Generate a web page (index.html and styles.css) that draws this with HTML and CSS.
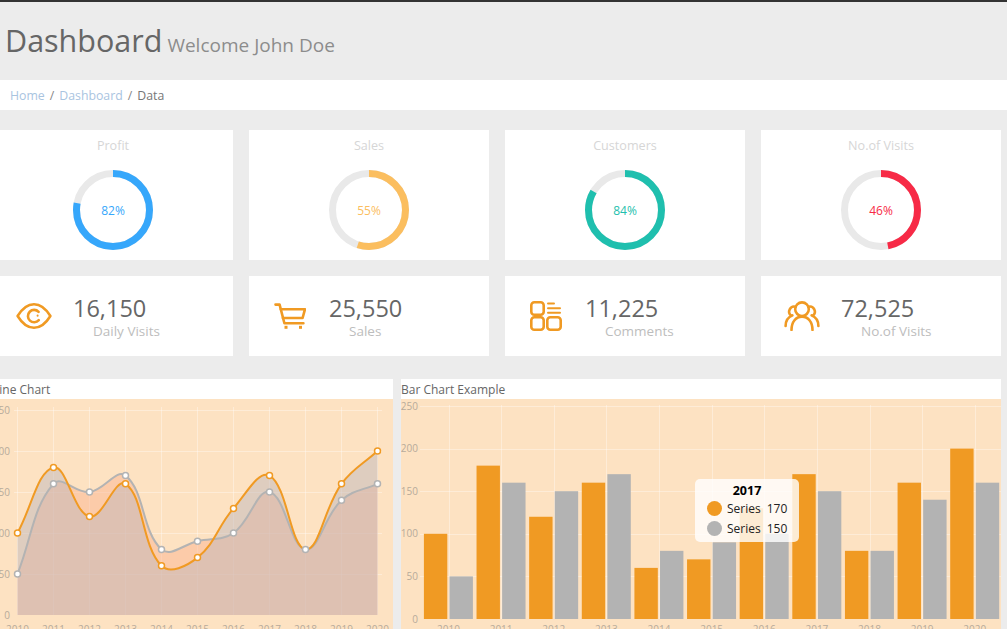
FILE: index.html
```html
<!DOCTYPE html>
<html lang="en">
<head>
<meta charset="utf-8">
<title>Dashboard</title>
<link rel="stylesheet" href="styles.css">
</head>
<body>
<header class="page-head">
  <h1 class="page-title">Dashboard</h1>
  <span class="page-sub">Welcome John Doe</span>
</header>
<nav class="crumbs">
  <a class="crumb-link">Home</a><span class="crumb-sep">/</span><a class="crumb-link">Dashboard</a><span class="crumb-sep">/</span><span class="crumb-now">Data</span>
</nav>
<main class="content">
  <section class="cards">
    <article class="card donut-card">
      <h2 class="card-title">Profit</h2>
      <svg class="donut" viewBox="0 0 80 80"><circle class="track" cx="40" cy="40" r="36.5" pathLength="100"/><circle class="arc blue" cx="40" cy="40" r="36.5" pathLength="100" stroke-dasharray="78 100"/><text class="pct blue-text" x="40" y="44.5">82%</text></svg>
    </article>
    <article class="card donut-card">
      <h2 class="card-title">Sales</h2>
      <svg class="donut" viewBox="0 0 80 80"><circle class="track" cx="40" cy="40" r="36.5" pathLength="100"/><circle class="arc amber" cx="40" cy="40" r="36.5" pathLength="100" stroke-dasharray="55 100"/><text class="pct amber-text" x="40" y="44.5">55%</text></svg>
    </article>
    <article class="card donut-card">
      <h2 class="card-title">Customers</h2>
      <svg class="donut" viewBox="0 0 80 80"><circle class="track" cx="40" cy="40" r="36.5" pathLength="100"/><circle class="arc teal" cx="40" cy="40" r="36.5" pathLength="100" stroke-dasharray="83.5 100"/><text class="pct teal-text" x="40" y="44.5">84%</text></svg>
    </article>
    <article class="card donut-card">
      <h2 class="card-title">No.of Visits</h2>
      <svg class="donut" viewBox="0 0 80 80"><circle class="track" cx="40" cy="40" r="36.5" pathLength="100"/><circle class="arc red" cx="40" cy="40" r="36.5" pathLength="100" stroke-dasharray="47 100"/><text class="pct red-text" x="40" y="44.5">46%</text></svg>
    </article>

    <article class="card stat-card">
      <div class="stat-icon">
        <svg class="icon" width="36" height="28" viewBox="0 0 36 28"><path d="M1.6 14C6.5 6 11.5 2.2 18 2.2S29.5 6 34.4 14C29.5 22 24.5 25.8 18 25.8S6.5 22 1.6 14Z"/><path d="M22.8 18.2A6.2 6.2 0 1 1 22.6 9.8"/><path class="thin" d="M21.6 13.6V13.7"/></svg>
      </div>
      <div class="stat-body"><div class="stat-value">16,150</div><div class="stat-label">Daily Visits</div></div>
    </article>
    <article class="card stat-card">
      <div class="stat-icon">
        <svg class="icon" width="32" height="26" viewBox="0 0 32 26"><path d="M1.5 1.6H5.6L10.4 20.2H29.4"/><path d="M6.8 6.2H31L28.6 15H8.9"/><rect class="solid" x="10.5" y="22.8" width="3" height="3"/><rect class="solid" x="25" y="22.8" width="3" height="3"/></svg>
      </div>
      <div class="stat-body"><div class="stat-value">25,550</div><div class="stat-label">Sales</div></div>
    </article>
    <article class="card stat-card">
      <div class="stat-icon">
        <svg class="icon" width="32" height="30" viewBox="0 0 32 30"><rect x="1.3" y="1.3" width="12.4" height="12.4" rx="3"/><rect x="1.3" y="16.3" width="12.4" height="12.4" rx="3"/><rect x="17.3" y="16.3" width="13.4" height="12.4" rx="3"/><path class="thin" d="M18 2.6H24"/><path class="thin" d="M18 7.2H30"/><path class="thin" d="M18 11.8H30"/></svg>
      </div>
      <div class="stat-body"><div class="stat-value">11,225</div><div class="stat-label">Comments</div></div>
    </article>
    <article class="card stat-card">
      <div class="stat-icon">
        <svg class="icon" width="36" height="30" viewBox="0 0 36 30"><circle cx="18" cy="8.2" r="6.8"/><path d="M7.5 29C7.5 21 12 15.6 18 15.6S28.5 21 28.5 29"/><path d="M11.6 5.8A5 5 0 0 0 7.2 14.6"/><path d="M24.4 5.8A5 5 0 0 1 28.8 14.6"/><path d="M1.6 25C1.6 20 4 16.2 8.4 14.4"/><path d="M34.4 25C34.4 20 32 16.2 27.6 14.4"/></svg>
      </div>
      <div class="stat-body"><div class="stat-value">72,525</div><div class="stat-label">No.of Visits</div></div>
    </article>
  </section>

  <section class="charts">
    <article class="panel panel-line">
      <h2 class="panel-title">Line Chart</h2>
      <div class="plot"><svg id="line-chart" class="plot-svg" viewBox="-7 399 400 240"></svg></div>
    </article>
    <article class="panel panel-bar">
      <h2 class="panel-title">Bar Chart Example</h2>
      <div class="plot">
        <svg id="bar-chart" class="plot-svg" viewBox="401 399 600 240"></svg>
        <div class="tooltip">
          <div class="tip-title">2017</div>
          <div class="tip-row"><span class="tip-dot dot-orange"></span><span>Series</span><span>170</span></div>
          <div class="tip-row"><span class="tip-dot dot-grey"></span><span>Series</span><span>150</span></div>
        </div>
      </div>
    </article>
  </section>
</main>
<script src="chart.js"></script>
</body>
</html>
```
FILE: styles.css
```css
* { box-sizing: border-box; }
html, body { margin: 0; height: 629px; overflow: hidden; }
body {
  background: #ececec;
  border-top: 2px solid #333;
  font-family: "Open Sans", "Noto Sans", "Liberation Sans", sans-serif;
  color: #666;
}
.page-head {
  height: 78px;
  padding: 18px 0 0 5px;
  display: flex;
  align-items: baseline;
  gap: 5px;
}
.page-title { margin: 0; font-size: 30.5px; line-height: 40px; font-weight: 400; color: #666; }
.page-sub { font-size: 19px; color: #8c8c8c; }

.crumbs {
  height: 30px;
  background: #fff;
  padding-left: 10px;
  display: flex;
  align-items: center;
  font-size: 12.3px;
}
.crumb-link { color: #a9c4df; }
.crumb-sep { color: #888; margin: 0 5px; }
.crumb-now { color: #777; }

.content { width: 1008px; margin-left: -7px; padding-top: 20px; }
.cards {
  display: grid;
  grid-template-columns: repeat(4, 240px);
  grid-template-rows: 130px 80px;
  gap: 16px;
}
.card { background: #fff; }
.donut-card { display: flex; flex-direction: column; align-items: center; padding-top: 7px; }
.card-title { margin: 0 0 16px; font-size: 12.6px; line-height: 17px; font-weight: 400; color: #d6d6d6; }
.donut { width: 80px; height: 80px; display: block; }
.track, .arc { fill: none; stroke-width: 7; }
.track { stroke: #e9e9e9; }
.arc { transform: rotate(-90deg); transform-origin: 40px 40px; }
.blue { stroke: #36a7fb; }
.amber { stroke: #fbbe5f; }
.teal { stroke: #1fbfae; }
.red { stroke: #f72a46; }
.pct { font-size: 12px; text-anchor: middle; }
.blue-text { fill: #36a7fb; }
.amber-text { fill: #fbbe5f; }
.teal-text { fill: #1fbfae; }
.red-text { fill: #f72a46; }

.stat-card { display: flex; align-items: center; }
.stat-icon { flex: 0 0 80px; padding-left: 1px; display: flex; justify-content: center; }
.icon { display: block; fill: none; stroke: #f09a23; stroke-width: 2.6; stroke-linecap: round; stroke-linejoin: round; }
.icon .solid { fill: #f09a23; stroke: none; }
.icon .thin { stroke-width: 2; }
.stat-body { display: flex; flex-direction: column; }
.stat-value { font-size: 23.5px; line-height: 30px; color: #666; }
.stat-label { margin-left: 20px; font-size: 13.5px; line-height: 16px; color: #bdbdbd; }

.charts { display: flex; gap: 8px; margin-top: 23px; }
.panel-line { flex: 0 0 400px; }
.panel-bar { flex: 0 0 600px; }
.panel-title { margin: 0; height: 20px; background: #fff; font-size: 12px; line-height: 21px; font-weight: 400; color: #666; }
.plot { position: relative; height: 240px; background: #fde2c2; }
.plot-svg { display: block; width: 100%; height: 100%; }
.grid-line { stroke: rgba(255, 255, 255, 0.35); stroke-width: 1; }
.axis { font-size: 10px; fill: #b7ab9b; }
.axis-end { text-anchor: end; }
.axis-mid { text-anchor: middle; }
.area-a { fill: rgba(192, 184, 188, 0.5); }
.area-b { fill: rgba(250, 175, 140, 0.45); }
.curve { fill: none; stroke-width: 2; }
.curve-a { stroke: #f09a23; }
.curve-b { stroke: #b3b3b3; }
.pt { fill: #fff; stroke-width: 1.5; }
.pt-a { stroke: #f09a23; }
.pt-b { stroke: #b3b3b3; }
.bar-a { fill: #f09a23; }
.bar-b { fill: #b3b3b3; }

.tooltip {
  position: absolute;
  left: 294px;
  top: 80px;
  width: 104px;
  height: 63px;
  padding: 3px 0 0 12px;
  border-radius: 5px;
  background: rgba(255, 255, 255, 0.8);
  font-size: 12px;
  color: #222;
}
.tip-title { margin-left: -12px; text-align: center; font-size: 12.5px; line-height: 17px; font-weight: 700; color: #000; }
.tip-row { display: flex; align-items: center; height: 19.6px; }
.tip-row span:nth-child(2) { margin-right: 6px; }
.tip-dot { flex: 0 0 15px; height: 15px; border-radius: 50%; margin-right: 5px; }
.dot-orange { background: #f09a23; }
.dot-grey { background: #b3b3b3; }
```
FILE: chart.js
```js
(function () {
  var NS = 'http://www.w3.org/2000/svg';
  var A = [100, 180, 120, 160, 60, 70, 130, 170, 80, 160, 200];
  var B = [50, 160, 150, 170, 80, 90, 100, 150, 80, 140, 160];
  var YEARS = [2010, 2011, 2012, 2013, 2014, 2015, 2016, 2017, 2018, 2019, 2020];
  var TICKS = [0, 50, 100, 150, 200, 250];

  function el(parent, tag, attrs, text) {
    var n = document.createElementNS(NS, tag);
    Object.keys(attrs).forEach(function (k) { n.setAttribute(k, attrs[k]); });
    if (text !== undefined) n.textContent = text;
    parent.appendChild(n);
    return n;
  }
  function hline(svg, x1, x2, y) { el(svg, 'line', { 'class': 'grid-line', x1: x1, x2: x2, y1: y, y2: y }); }
  function vline(svg, x, y1, y2) { el(svg, 'line', { 'class': 'grid-line', x1: x, x2: x, y1: y1, y2: y2 }); }

  function spline(pts, t) {
    var ctrl = pts.map(function (p, i) {
      var a = pts[Math.max(i - 1, 0)], c = pts[Math.min(i + 1, pts.length - 1)];
      var d1 = Math.hypot(p[0] - a[0], p[1] - a[1]), d2 = Math.hypot(c[0] - p[0], c[1] - p[1]);
      var s = d1 + d2 || 1, f1 = t * d1 / s, f2 = t * d2 / s, dx = c[0] - a[0], dy = c[1] - a[1];
      return { px: p[0] - f1 * dx, py: p[1] - f1 * dy, nx: p[0] + f2 * dx, ny: p[1] + f2 * dy };
    });
    var d = 'M' + pts[0][0] + ' ' + pts[0][1];
    for (var i = 1; i < pts.length; i++) {
      d += 'C' + ctrl[i - 1].nx.toFixed(2) + ' ' + ctrl[i - 1].ny.toFixed(2) + ' ' +
        ctrl[i].px.toFixed(2) + ' ' + ctrl[i].py.toFixed(2) + ' ' + pts[i][0] + ' ' + pts[i][1];
    }
    return d;
  }

  function lineChart(svg) {
    var X = function (i) { return 17.5 + 36 * i; };
    var Y = function (v) { return 615 - v * 0.82; };
    TICKS.forEach(function (v) {
      var y = Math.round(Y(v)) + 0.5;
      if (v > 0) hline(svg, 14, 382, y);
      el(svg, 'text', { 'class': 'axis axis-end', x: 10, y: Y(v) + 3.5 }, v);
    });
    YEARS.forEach(function (yr, i) {
      vline(svg, Math.floor(X(i)) + 0.5, 407, 615);
      el(svg, 'text', { 'class': 'axis axis-mid', x: X(i), y: 632.5 }, yr);
    });
    var pa = A.map(function (v, i) { return [X(i), Y(v)]; });
    var pb = B.map(function (v, i) { return [X(i), Y(v)]; });
    var da = spline(pa, 0.4), db = spline(pb, 0.4);
    var close = 'L' + X(10) + ' 615L' + X(0) + ' 615Z';
    el(svg, 'path', { 'class': 'area-b', d: db + close });
    el(svg, 'path', { 'class': 'area-a', d: da + close });
    el(svg, 'path', { 'class': 'curve curve-b', d: db });
    el(svg, 'path', { 'class': 'curve curve-a', d: da });
    pb.forEach(function (p) { el(svg, 'circle', { 'class': 'pt pt-b', cx: p[0], cy: p[1], r: 3 }); });
    pa.forEach(function (p, i) { if (A[i] !== B[i]) el(svg, 'circle', { 'class': 'pt pt-a', cx: p[0], cy: p[1], r: 3 }); });
  }

  function barChart(svg) {
    var X = function (i) { return 448.5 + 52.63 * i; };
    var Y = function (v) { return 619 - v * 0.852; };
    TICKS.forEach(function (v) {
      var y = Math.round(Y(v)) + 0.5;
      if (v > 0) hline(svg, 420, 1001, y);
      el(svg, 'text', { 'class': 'axis axis-end', x: 418, y: Y(v) + 3.5 }, v);
    });
    YEARS.forEach(function (yr, i) {
      vline(svg, Math.round(X(i)) + 0.5, 405, 619);
      el(svg, 'text', { 'class': 'axis axis-mid', x: X(i), y: 633 }, yr);
      el(svg, 'rect', { 'class': 'bar-a', x: X(i) - 24.6, y: Y(A[i]), width: 23.4, height: A[i] * 0.852 });
      el(svg, 'rect', { 'class': 'bar-b', x: X(i) + 1, y: Y(B[i]), width: 23.4, height: B[i] * 0.852 });
    });
  }

  lineChart(document.getElementById('line-chart'));
  barChart(document.getElementById('bar-chart'));
})();
```
